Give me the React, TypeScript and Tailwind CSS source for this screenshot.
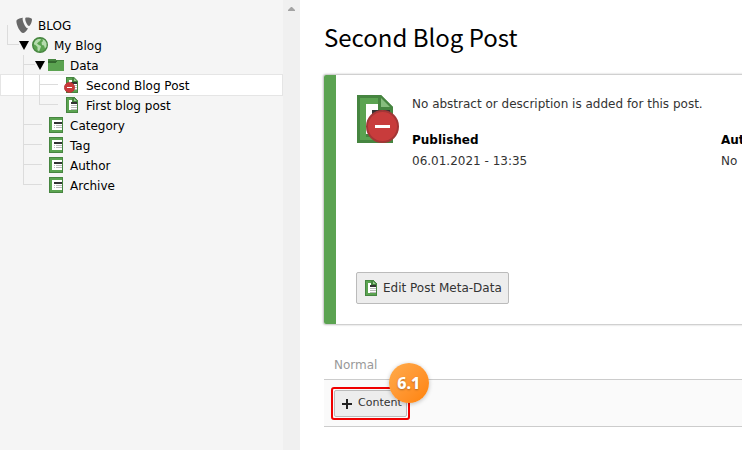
import React from "react";

type IconProps = { className?: string };

function PageIcon({ className = "h-4 w-4" }: IconProps) {
  return (
    <svg viewBox="0 0 16 16" className={className} shapeRendering="crispEdges" aria-hidden="true">
      <path fill="#468540" d="M2 0h8l4 4v12H2z" />
      <path fill="#5ba351" d="M3 1h6v3l1 1h3v10H3z" />
      <path fill="#fff" d="M5 3h3v2h5v8H5z" />
      <path fill="#468540" d="M8 1h2l4 4H8z" />
      <path fill="#9bca93" shapeRendering="auto" d="M10 1.200V4h2.800z" />
      <path fill="#333" d="M7 5h6v2H7z" />
      <path fill="#b9b9b9" d="M7 8h6v1H7zM7 10h6v1H7zM7 12h6v1H7z" />
    </svg>
  );
}

function HiddenPageIcon({ className = "h-4 w-4" }: IconProps) {
  return (
    <svg viewBox="0 0 16 16" className={className} aria-hidden="true">
      <path fill="#468540" d="M2 0h8l4 4v12H2z" />
      <path fill="#5ba351" d="M3 1h6v3l1 1h3v10H3z" />
      <path fill="#fff" d="M5 3h3v2h5v8H5z" />
      <path fill="#468540" d="M8 1h2l4 4H8z" />
      <path fill="#9bca93" d="M10 1.200V4h2.800z" />
      <path fill="#333" d="M7 5h6v2H7z" />
      <path fill="#b9b9b9" d="M9 8h4v1H9zM9 10h4v1H9zM9 12h4v1H9z" />
      <circle cx="5.500" cy="10.500" r="5.100" fill="#c93a3a" stroke="#b03636" strokeWidth=".8" />
      <path fill="#fff" d="M3 10h5v1H3z" />
    </svg>
  );
}

function LargeHiddenPageIcon() {
  return (
    <svg viewBox="0 0 48 48" className="h-12 w-12 shrink-0" aria-hidden="true">
      <path fill="#468540" d="M1 0h24l12 12v36H1z" />
      <path fill="#5ba351" d="M4 3h18v12h12v30H4z" />
      <path fill="#fff" d="M10 9h12v6h12v27H10z" />
      <path fill="#468540" d="M22 0h3l12 12v3H22z" />
      <path fill="#86bd7d" d="M25 3v9h9z" />
      <path fill="#333" d="M16 15h18v4H16z" />
      <path fill="#468540" d="M10 39h12v3H10z" />
      <circle cx="26.500" cy="31.500" r="15.500" fill="#c83c3c" stroke="#a33636" strokeWidth="2" />
      <path fill="#fff" d="M19 30h15v3H19z" />
    </svg>
  );
}

function ListIcon() {
  return (
    <svg viewBox="0 0 16 16" className="h-4 w-4" shapeRendering="crispEdges" aria-hidden="true">
      <path fill="#468540" d="M1 0h14v16H1z" />
      <path fill="#5ba351" d="M2 1h12v14H2z" />
      <path fill="#fff" d="M4 3h10v10H4z" />
      <path fill="#333" d="M6 5h8v2H6z" />
      <path fill="#b9b9b9" d="M6 8h1v1H6zM8 8h6v1H8zM6 10h1v1H6zM8 10h6v1H8z" />
    </svg>
  );
}

function FolderIcon() {
  return (
    <svg viewBox="0 0 16 16" className="h-4 w-4" shapeRendering="crispEdges" aria-hidden="true">
      <path fill="#468540" d="M0 2h8v1h8v3H0z" />
      <path fill="#34692f" d="M0 4h9v1H8v1H0z" />
      <path fill="#5ba351" d="M0 6h8V5h1V4h7v10H0z" />
    </svg>
  );
}

function GlobeIcon() {
  return (
    <svg viewBox="0 0 16 16" className="h-4 w-4" aria-hidden="true">
      <circle cx="8" cy="8" r="7.300" fill="#5ba351" stroke="#468540" strokeWidth="1.400" />
      <path fill="#b5dcae" d="M2 6 3.500 3.500 6 2h3L8 4 6.500 5 5 6.500l1 1L9 9l-.5 2L7 14.500 5.500 13V10L3.500 8 2 7.500zM10.500 2l2.500 1.500L14.500 6v3.500L13 11.500l-1-3-2-.5-.5-2.500L11 4z" />
    </svg>
  );
}

function LogoIcon() {
  return (
    <svg viewBox="0 0 16 16" className="h-4 w-4" aria-hidden="true">
      <path fill="#686868" d="M12.100 11.200c-.2.100-.4.100-.6.100-2 0-4.900-6.900-4.900-9.200 0-.9.200-1.200.5-1.400C4.700 1 1.700 1.900.8 3.100.6 3.400.4 3.900.4 4.500c0 3.700 3.900 11.500 6.700 11.500 1.300 0 3.400-2.100 5-4.800M10.900.400c2.600 0 5.100.4 5.100 1.900 0 3-1.900 6.600-2.900 6.600-1.700 0-3.900-4.800-3.900-7.200 0-1.100.4-1.300 1.700-1.300" />
    </svg>
  );
}

type Node = {
  label: string;
  icon: React.ReactNode;
  level: number;
  open?: boolean;
  last?: boolean;
  selected?: boolean;
};

const nodes: Node[] = [
  { label: "BLOG", icon: <LogoIcon />, level: 0 },
  { label: "My Blog", icon: <GlobeIcon />, level: 1, open: true, last: true },
  { label: "Data", icon: <FolderIcon />, level: 2, open: true },
  { label: "Second Blog Post", icon: <HiddenPageIcon />, level: 3, selected: true },
  { label: "First blog post", icon: <PageIcon />, level: 3, last: true },
  { label: "Category", icon: <ListIcon />, level: 2 },
  { label: "Tag", icon: <ListIcon />, level: 2 },
  { label: "Author", icon: <ListIcon />, level: 2 },
  { label: "Archive", icon: <ListIcon />, level: 2, last: true },
];

function Connector({ open, last }: { open?: boolean; last?: boolean }) {
  return (
    <span className="flex w-[25px] shrink-0 self-stretch">
      <span className={`border-l border-[#dcdcdc] ${last ? "h-2.5" : "h-5"}`} />
      <span className={`h-2.5 border-b border-[#dcdcdc] ${open ? "w-[11px]" : "w-[18px]"}`} />
      {open && (
        <svg viewBox="0 0 10 9" className="mt-1.5 h-[9px] w-2.5" aria-hidden="true">
          <path d="M0 0h10L5 9z" />
        </svg>
      )}
    </span>
  );
}

function TreeRow({ node }: { node: Node }) {
  return (
    <li
      role="treeitem"
      aria-level={node.level + 1}
      aria-selected={!!node.selected}
      className={`flex h-5 items-center pl-[7px] ${
        node.selected ? "bg-white shadow-[inset_1px_0_0_#e5e5e5,inset_-1px_0_0_#e5e5e5,0_-1px_0_#e5e5e5,0_1px_0_#e5e5e5]" : ""
      }`}
    >
      {node.level === 0 ? (
        <span className="flex h-5 w-[9px] items-end">
          <span className="h-2.5 border-l border-[#dcdcdc]" />
        </span>
      ) : (
        <>
          {node.level > 1 && <span className="w-4 shrink-0" />}
          {node.level > 2 && <span className="h-5 w-4 shrink-0 border-l border-[#dcdcdc]" />}
          <Connector open={node.open} last={node.last} />
        </>
      )}
      <span className="shrink-0">{node.icon}</span>
      <span className="ml-1.5 whitespace-nowrap pt-0.5">{node.label}</span>
    </li>
  );
}

export default function App() {
  return (
    <div className="flex h-screen overflow-hidden bg-white font-['Verdana','DejaVu_Sans',sans-serif] text-xs text-black">
      <aside className="flex w-[300px] shrink-0 bg-[#f5f5f5]">
        <ul role="tree" aria-label="Pages" className="grow pt-[15px]">
          {nodes.map((node) => (
            <TreeRow key={node.label} node={node} />
          ))}
        </ul>
        <div className="flex w-[17px] justify-center bg-[#f0f0f0] pt-[7px]">
          <svg viewBox="0 0 7 4" className="h-1 w-[7px]" aria-hidden="true">
            <path fill="#a3a3a3" d="M3 0h1l3 3v1H0V3z" />
          </svg>
        </div>
      </aside>

      <main className="min-w-0 grow overflow-hidden pl-6 pt-[19px]">
        <h1 className="font-['Noto_Sans_CJK_SC','Noto_Sans',sans-serif] text-2xl leading-9">Second Blog Post</h1>

        <section className="mt-5 flex min-h-[249px] w-max min-w-full rounded-xs border-l-12 border-[#5ba351] p-5 shadow-[0_0_2px_1px_rgba(0,0,0,0.25)]">
          <div className="flex flex-col items-start justify-between">
            <div className="flex gap-2">
              <LargeHiddenPageIcon />
              <div className="leading-[21px] text-[#333]">
                <p className="-mt-px">No abstract or description is added for this post.</p>
                <dl className="mt-[15px] grid grid-cols-[309px_309px]">
                  <div>
                    <dt className="font-bold text-black">Published</dt>
                    <dd>06.01.2021 - 13:35</dd>
                  </div>
                  <div>
                    <dt className="font-bold text-black">Aut</dt>
                    <dd>No</dd>
                  </div>
                </dl>
              </div>
            </div>
            <button
              type="button"
              className="flex h-8 items-center gap-1 rounded-xs border border-[#bbb] bg-[#ededed] px-1.5 text-[#333]"
            >
              <PageIcon />
              Edit Post Meta-Data
            </button>
          </div>
        </section>

        <section className="pt-[33px]">
          <h2 className="px-2.5 pb-1.5 leading-4 text-[#999]">Normal</h2>
          <div className="flex border-y border-[#ccc] bg-[#fafafa] px-[7px] pb-1.5 pt-[7px]">
            <div className="relative rounded-[3px] border-2 border-[#f00000] p-px">
              <button
                type="button"
                className="flex h-[27px] items-center gap-1.5 rounded-xs border border-[#bbb] bg-[#ededed] pl-[7px] pr-1 text-[11px] text-[#333]"
              >
                <svg viewBox="0 0 10 10" className="h-2.5 w-2.5" aria-hidden="true">
                  <path fill="#222" d="M4 0h2v4h4v2H6v4H4V6H0V4h4z" />
                </svg>
                Content
              </button>
              <span className="absolute -right-[21px] -top-[26px] flex h-10 w-10 items-center justify-center rounded-full bg-linear-to-br from-[#ffab4a] to-[#ff8200] font-['Noto_Sans',sans-serif] text-base font-extrabold text-white shadow-[0_1px_4px_rgba(0,0,0,0.25)] [text-shadow:0_1px_2px_rgba(0,0,0,0.3)]">
                6.1
              </span>
            </div>
          </div>
        </section>
      </main>
    </div>
  );
}
